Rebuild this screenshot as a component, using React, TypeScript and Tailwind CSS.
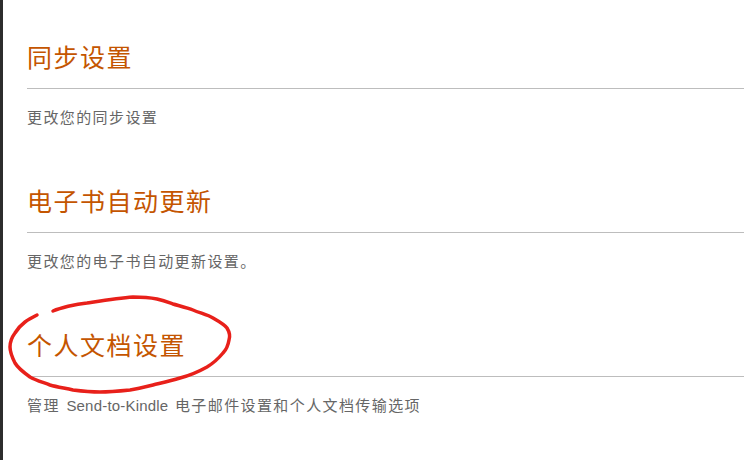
const sections = [
  { title: "同步设置", desc: ["更改您的同步设置"] },
  { title: "电子书自动更新", desc: ["更改您的电子书自动更新设置。"] },
  {
    title: "个人文档设置",
    desc: ["管理 ", "Send-to-Kindle", " 电子邮件设置和个人文档传输选项"],
  },
];

function Scribble() {
  // hand-drawn red circle around the third heading
  return (
    <svg
      className="pointer-events-none absolute left-0 top-0"
      width="744"
      height="460"
      viewBox="0 0 744 460"
      fill="none"
    >
      <path
        d="M53 311 C60 308 75 304 87 303 C100 301 118 298 133 297 C145 297 152 298 157 299 C165 301 170 303 173 304 C180 306 188 308 193 310 C200 313 208 315 213 318 C220 322 225 325 227 328 C230 333 230 337 229 340 C228 346 226 350 223 353 C218 359 212 364 207 367 C198 372 188 376 180 378 C170 381 161 383 153 385 C145 387 137 389 130 390 C120 391 110 392 100 392 C90 392 81 391 73 390 C64 388 57 387 50 385 C42 382 35 380 30 377 C23 372 18 368 15 363 C12 357 10 352 10 347 C10 341 12 337 15 333 C18 328 21 325 25 322 C29 319 33 317 37 315"
        stroke="#e8201a"
        strokeWidth="3.5"
        strokeLinecap="round"
        strokeLinejoin="round"
      />
    </svg>
  );
}

export default function App() {
  return (
    <div
      className="relative flex h-[460px] w-[744px] overflow-hidden bg-white"
      style={{ fontFamily: '"Liberation Sans", "Noto Sans CJK SC", sans-serif' }}
    >
      <div className="w-[3px] shrink-0 bg-[#2d2d2d]" />
      <main className="flex-1 pl-[24px] pt-[42px]">
        {sections.map((s) => (
          <section key={s.title} className="mb-[58px]">
            <h2 className="text-[25px] leading-[32px] tracking-[1.5px] text-[#c45500]">
              {s.title}
            </h2>
            <div className="mt-[14px] h-px bg-[#bdbdbd]" />
            <p className="mt-[19px] text-[15px] leading-[20px] tracking-[1.4px] text-[#666666]">
              {s.desc.map((part, i) =>
                i === 1 ? (
                  <span key={i} className="mx-px tracking-[0.2px]">
                    {part}
                  </span>
                ) : (
                  <span key={i}>{part}</span>
                ),
              )}
            </p>
          </section>
        ))}
      </main>
      <Scribble />
    </div>
  );
}
